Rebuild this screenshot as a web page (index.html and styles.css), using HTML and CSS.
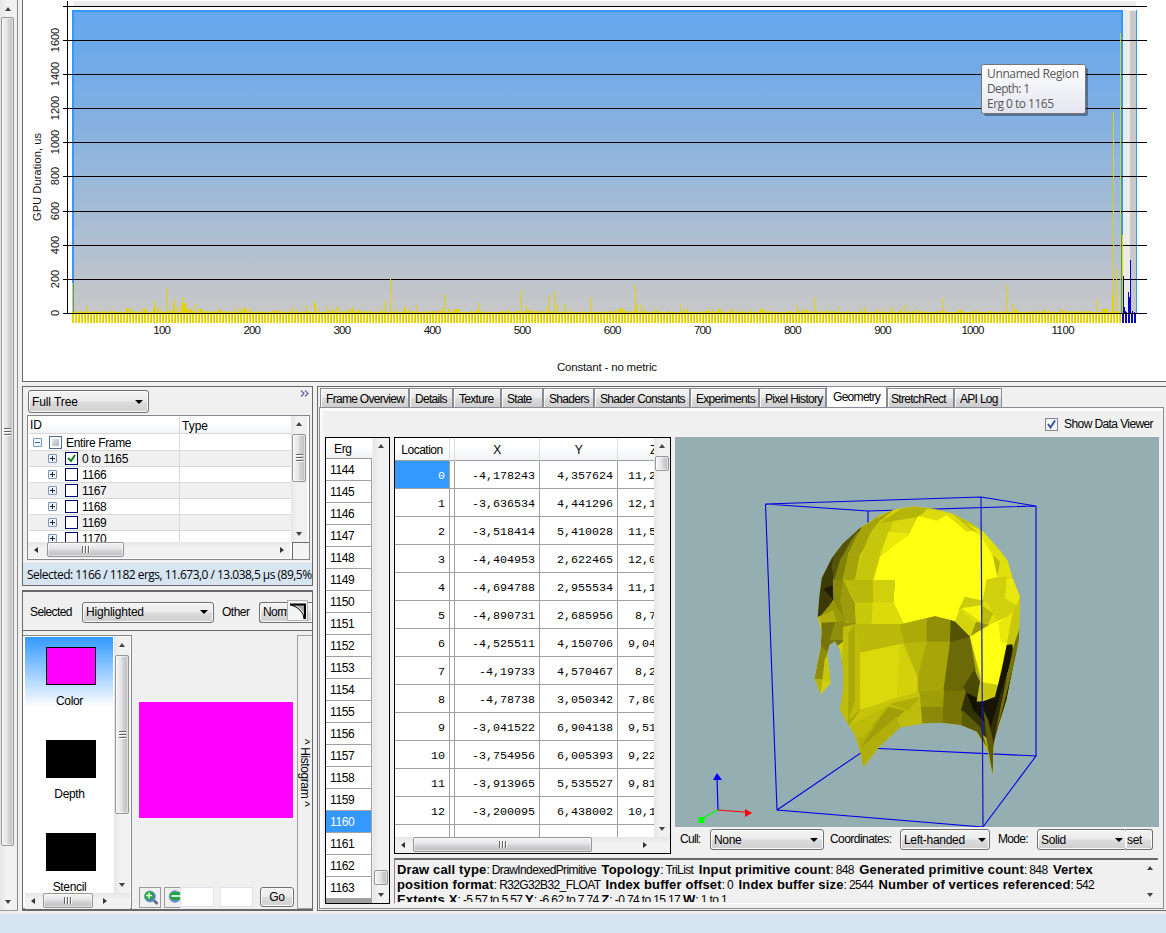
FILE: index.html
```html
<!DOCTYPE html>
<html lang="en">
<head>
<meta charset="utf-8">
<title>Frame Analyzer</title>
<link rel="stylesheet" href="styles.css">
</head>
<body>
<div class="app">
  <div class="vbar outer-bar"><i class="arr a-up"></i><div class="track"><div class="thumb outer-thumb"><i class="grip"></i></div></div><i class="arr a-down"></i></div>
  <main class="content">
    <section class="chart">
      <svg class="plot" width="1143" height="381" viewBox="23 0 1143 381">
        <defs>
          <linearGradient id="sky" x1="0" y1="0" x2="0" y2="1"><stop offset="0" stop-color="#66a8ee"/><stop offset=".17" stop-color="#70aae8"/><stop offset=".9" stop-color="#bec4cb"/><stop offset="1" stop-color="#c8c8c8"/></linearGradient>
          <linearGradient id="tipbg" x1="0" y1="0" x2="0" y2="1"><stop offset="0" stop-color="#fff"/><stop offset="1" stop-color="#e4e5f0"/></linearGradient>
          <pattern id="ty" width="3" height="10" patternUnits="userSpaceOnUse"><rect width="2" height="10" fill="#f0dc00"/><rect x="1" width="1" height="10" fill="#dcca08"/></pattern>
        </defs>
        <g shape-rendering="crispEdges">
          <rect x="73" y="1" width="1063" height="5" fill="#ebebeb"/>
          <rect x="72" y="10" width="1064" height="303" fill="#ebebeb"/>
          <rect x="1130" y="11" width="6" height="302" fill="#c8c8c8"/>
          <rect x="1136" y="10" width="1" height="303" fill="#3399ff"/>
          <rect x="72" y="10" width="1051" height="303" fill="#3399ff"/>
          <rect x="74" y="12" width="1047" height="301" fill="url(#sky)"/>
          <g id="gridlines"></g>
          <rect x="67" y="1" width="1" height="313" fill="#000"/>
          <g id="bars"></g>
          <rect x="63" y="313" width="1084" height="1" fill="#000"/>
          <rect x="72" y="314" width="1050" height="9" fill="url(#ty)"/>
          <path d="M1123 314v9M1126 314v9M1129 314v9M1132 314v9M1135 314v9" stroke="#0a0ab4" stroke-width="2"/>
        </g>
        <g id="labels" class="axis"></g>
        <text class="axis" transform="translate(41 177) rotate(-90)" text-anchor="middle" textLength="88">GPU Duration, us</text>
        <text class="axis cap" x="557" y="371" textLength="100">Constant - no metric</text>
        <rect x="984" y="68" width="104" height="48" rx="2" fill="#000" opacity=".35"/>
        <rect x="981.5" y="64.5" width="104" height="49" rx="2" fill="url(#tipbg)" stroke="#767676"/>
        <g class="tiptext"><text x="987" y="78" textLength="92">Unnamed Region</text><text x="987" y="93" textLength="43">Depth: 1</text><text x="987" y="108" textLength="67">Erg 0 to 1165</text></g>
      </svg>
    </section>
    <div class="lower">
      <div class="leftcol">
        <section class="tree-panel">
          <div class="tree-top"><div class="combo full">Full Tree</div><svg class="chev" width="9" height="7" viewBox="0 0 9 7"><path d="M1 .5l3 3-3 3M5 .5l3 3-3 3" fill="none" stroke="#6464a8" stroke-width="1.200"/></svg></div>
          <div class="tree">
            <div class="tree-view">
              <div class="tree-main">
                <div class="trow thead"><span class="cid">ID</span><span>Type</span></div>
                <div class="trow root"><span class="cid"><i class="pm minus"></i><i class="box part"></i>Entire Frame</span></div>
                <div class="trow"><span class="cid sub"><i class="pm"></i><i class="box"><svg width="11" height="11" viewBox="0 0 11 11"><path d="M2 5l3 3 4-6" fill="none" stroke="#118011" stroke-width="2"/></svg></i>0 to 1165</span></div>
                <div class="trow"><span class="cid sub"><i class="pm"></i><i class="box"></i>1166</span></div>
                <div class="trow"><span class="cid sub"><i class="pm"></i><i class="box"></i>1167</span></div>
                <div class="trow"><span class="cid sub"><i class="pm"></i><i class="box"></i>1168</span></div>
                <div class="trow"><span class="cid sub"><i class="pm"></i><i class="box"></i>1169</span></div>
                <div class="trow"><span class="cid sub"><i class="pm"></i><i class="box"></i>1170</span></div>
              </div>
              <div class="vbar tree-v"><i class="arr a-up"></i><div class="track"><div class="thumb"><i class="grip"></i></div></div><i class="arr a-down"></i></div>
            </div>
            <div class="tree-bot"><div class="hbar"><i class="arr a-left"></i><div class="track"><div class="thumb"><i class="grip"></i></div></div><i class="arr a-right"></i></div><i class="corner"></i></div>
          </div>
          <div class="status">Selected: 1166 / 1182 ergs, 11.673,0 / 13.038,5 µs (89,5%</div>
        </section>
        <section class="buf-panel">
          <div class="buf-tools"><span class="lb1">Selected</span><div class="combo hl">Highlighted</div><span class="lb2">Other</span><div class="combo norm">Norm</div>
            <svg class="curve" width="21" height="21" viewBox="0 0 21 21"><rect x=".5" y=".5" width="20" height="20" fill="#f4f4f4" stroke="#b0b0b0"/><path d="M5 4H18V18Q17 7 5 5z" fill="#a8a8a8"/><path d="M3 4.500H18V19" fill="none" stroke="#000" stroke-width="2"/><path d="M4 5L9 7 13 10 16 14 17 19" fill="none" stroke="#000"/></svg>
          </div>
          <div class="buf-body">
            <div class="list">
              <div class="list-view">
                <div class="items">
                  <div class="item sel"><i class="mag"></i><span>Color</span></div>
                  <div class="item"><i></i><span>Depth</span></div>
                  <div class="item"><i></i><span>Stencil</span></div>
                </div>
                <div class="vbar list-v"><i class="arr a-up"></i><div class="track"><div class="thumb"><i class="grip"></i></div></div><i class="arr a-down"></i></div>
              </div>
              <div class="hbar list-h"><i class="arr a-left"></i><div class="track"><div class="thumb"><i class="grip"></i></div></div><i class="arr a-right"></i></div>
            </div>
            <div class="preview">
              <div class="image"></div>
              <div class="zoomrow">
                <svg class="zin" width="22" height="21" viewBox="0 0 22 21"><rect x=".5" y=".5" width="21" height="20" fill="#f0f0f0" stroke="#9a9a9a"/><path d="M15 13.500l3.500 3.500" stroke="#56657c" stroke-width="2.500"/><circle cx="11" cy="9.500" r="5.500" fill="#4a7fc4" stroke="#7f9fce"/><circle cx="10" cy="8.500" r="4.300" fill="#1fb02c"/><path d="M7 8.500h6M10 5.500v6" stroke="#e4ffe0" stroke-width="1.600"/></svg>
                <svg class="zout" width="16" height="21" viewBox="0 0 16 21"><path d="M16 .5H.5V20.500H16" fill="#f0f0f0" stroke="#9a9a9a"/><circle cx="11" cy="9.500" r="5.800" fill="#5588c4" stroke="#7f9fce"/><path d="M16 5H10a4 4 0 0 0 0 8h6z" fill="#27a04a"/><path d="M7.500 9h8.500" stroke="#e4ffe0" stroke-width="1.800"/></svg>
                <i class="inp i1"></i><i class="inp i2"></i><div class="btn go">Go</div>
              </div>
            </div>
            <div class="histo"><span>^ Histogram ^</span></div>
          </div>
        </section>
      </div>
      <section class="details">
        <nav class="tabs"><span class="t1">Frame Overview</span><span class="t2">Details</span><span class="t3">Texture</span><span class="t4">State</span><span class="t5">Shaders</span><span class="t6">Shader Constants</span><span class="t7">Experiments</span><span class="t8">Pixel History</span><span class="t9 active">Geometry</span><span class="t10">StretchRect</span><span class="t11">API Log</span></nav>
        <div class="page">
          <div class="show"><svg width="13" height="13" viewBox="0 0 13 13"><rect x=".5" y=".5" width="12" height="12" fill="#f2f4f6" stroke="#82868c"/><path d="M3 6l2.500 3.500L10 2.500" fill="none" stroke="#3f549c" stroke-width="2"/></svg>Show Data Viewer</div>
          <div class="cols">
            <div class="erg"><div class="erg-main"><div class="erg-head">Erg</div><div id="ergs"></div></div>
              <div class="vbar erg-v"><i class="arr a-up"></i><div class="track"><div class="thumb"></div></div><i class="arr a-down"></i></div></div>
            <div class="rest">
              <div class="mid">
                <div class="loc">
                  <div class="loc-view"><div class="loc-main"><div class="lrow lhead"><b>Location</b><b></b><b>X</b><b>Y</b><b>Z</b></div><div id="locs"></div></div>
                    <div class="vbar loc-v"><i class="arr a-up"></i><div class="track"><div class="thumb"></div></div><i class="arr a-down"></i></div></div>
                  <div class="hbar loc-h"><i class="arr a-left"></i><div class="track"><div class="thumb"><i class="grip"></i></div></div><i class="arr a-right"></i></div>
                </div>
                <div class="viewer">
                  <svg class="scene" width="484" height="390" viewBox="675 437 484 390">
                    <path fill="none" stroke="#0000e6" stroke-width="1.100" d="M765.500 504L981 497 1036 506 868 511zM765.500 504L777 810 983 827 1036 756 868 748L777 810M1036 506V756M868 511V748"/>
                    <g transform="translate(780 480) scale(.33333)">
                      <clipPath id="sil"><path d="M113 412L118 350 125 295 155 235 190 190 245 140 300 105 345 88 400 79 465 87 515 100 575 130 610 155 655 205 683 242 697 290 720 350 717 480 700 560 680 660 655 740 641 790 638 885 625 820 590 755 543 735 487 728 430 730 360 742 298 800 250 862 240 810 225 765 200 725 180 690 190 630 190 570 180 510 165 484 148 495 142 520 152 610 122 643 103 597 122 500 125 455z"/></clipPath>
                      <g clip-path="url(#sil)">
                        <rect x="90" y="60" width="650" height="840" fill="#d0d00e"/>
                        <path d="M110 415L115 300 160 220 250 130 225 190 185 240 160 300 160 360 130 405z" fill="#3c3a08"/>
                        <path d="M190 190L300 105 235 170 205 230 188 300 160 300 165 240z" fill="#828208"/>
                        <path d="M170 190L250 130 215 180 180 240 162 300 155 260z" fill="#56540a"/>
                        <path d="M245 140L345 85 310 115 280 160 240 225 225 300 188 300 205 220z" fill="#a4a40a"/>
                        <path d="M300 120L400 79 330 155 300 215 278 300 225 300 250 210 270 160z" fill="#c6c60c"/>
                        <path d="M345 95L400 79 465 87 420 112 380 165 300 215 330 155z" fill="#d8d80c"/>
                        <path d="M360 88L400 79 455 86 410 112 300 130z" fill="#b5b508"/>
                        <path d="M440 87L520 102 575 130 600 170 480 125 420 112z" fill="#dcdc0c"/>
                        <path d="M325 155L385 160 320 245 340 303 278 303z" fill="#eaea0a"/>
                        <path d="M415 108L470 122 500 105 560 155 590 150 640 225 655 290 620 300 605 375 555 350 525 425 465 409 370 432 340 370 345 300 283 300 300 230 385 165z" fill="#ffff12"/>
                        <path d="M515 100L575 130 620 175 575 150z" fill="#bebe0c"/>
                        <path d="M560 130L610 155 683 242 640 230 600 165z" fill="#e6e60c"/>
                        <path d="M610 155L683 242 697 290 655 290 640 230z" fill="#e0e00c"/>
                        <path d="M638 225L660 245 652 290z" fill="#baba0c"/>
                        <path d="M620 298L697 293 708 330 680 360 612 360z" fill="#d0d00c"/>
                        <path d="M680 293L697 293 720 350 718 380 675 355z" fill="#e8e80e"/>
                        <path d="M160 300L190 300 225 375 195 425 160 365z" fill="#8c8a08"/><path d="M190 300H345L340 370 228 370z" fill="#b9b90c"/><path d="M278 300H345L340 368H280z" fill="#d0d00c"/>
                        <path d="M190 303L225 370 228 432 195 425 180 360z" fill="#9d9c0a"/>
                        <path d="M225 367L340 367 372 434 228 434z" fill="#c9c90c"/><path d="M278 367L340 367 372 434 275 434z" fill="#dbdb0c"/>
                        <path d="M130 327L158 315 160 360z" fill="#1e1c04"/><path d="M118 412L160 362 195 425 125 440z" fill="#9a980a"/>
                        <path d="M112 410L135 403 160 390 170 425 127 430z" fill="#b0ae0c"/>
                        <path d="M125 428L195 425 195 480 145 520 122 500z" fill="#77750a"/><path d="M165 425L228 430 205 480 150 480z" fill="#908e0a"/>
                        <path d="M122 500L142 515 128 598 103 597z" fill="#8e8c0a"/><path d="M135 530L148 560 152 610 127 600z" fill="#c5c50c"/><path d="M103 597H128L122 643z" fill="#b4b20c"/>
                        <path d="M555 350L620 365 650 420 625 435 575 470 525 425z" fill="#dfdf0c"/>
                        <path d="M555 350L612 363 605 375 535 390z" fill="#cccc0e"/><path d="M538 390L585 425 570 465 525 425z" fill="#d4d40c"/>
                        <path d="M545 385L605 375 610 430z" fill="#f7f712"/>
                        <path d="M605 375L640 400 625 432 607 430z" fill="#bbbb0c"/>
                        <path d="M190 440L228 431 370 433 465 409 525 425 570 470 600 590 605 660 640 800 638 885 590 755 430 730 298 800 250 862 180 690 192 560z" fill="#b3b20a"/>
                        <path d="M190 440L243 432 243 720 200 730 180 690z" fill="#bdbd0a"/><path d="M205 460L225 432 225 660 205 720z" fill="#a9a908"/>
                        <path d="M240 515L375 488 417 595 417 637 240 692z" fill="#d2d10c"/><path d="M240 515L360 491 350 650 240 692z" fill="#dad90c"/>
                        <path d="M225 432H362L374 489 240 518z" fill="#bbb90a"/>
                        <path d="M360 433L442 414 442 486 372 491z" fill="#abaa09"/><path d="M440 415L465 409 512 420 512 486 440 486z" fill="#918f08"/>
                        <path d="M370 490L442 485 415 597z" fill="#b8b70a"/><path d="M440 485H512L494 633 413 637 413 595z" fill="#a7a508"/>
                        <path d="M512 420L525 425 570 470 587 570 550 637 490 634 510 485z" fill="#6c6a07"/><path d="M512 420L525 425 570 470 510 487z" fill="#555306"/>
                        <path d="M415 635L494 630 489 730 427 730z" fill="#a09e08"/><path d="M418 681L490 680 487 732 425 732z" fill="#8b8907"/><path d="M492 632L560 633 543 737 487 732z" fill="#777506"/>
                        <path d="M583 568L600 605 599 660 558 640 550 620z" fill="#4b4906"/><path d="M558 636L605 660 640 790 590 750 543 690z" fill="#333106"/>
                        <path d="M560 640L605 660 625 740 580 690z" fill="#141301"/><path d="M548 690L600 740 620 800 590 755 543 737z" fill="#5b5a07"/>
                        <path d="M240 690L330 668 300 740 205 740 200 725z" fill="#aaa908"/><path d="M240 691L417 633 420 652 330 677 205 740z" fill="#c5c40b"/>
                        <path d="M330 670L420 650 427 732 360 744 298 800z" fill="#bdbc0a"/><path d="M330 672L385 692 420 650z" fill="#afae08"/>
                        <path d="M325 680L250 770 230 775 205 740z" fill="#bcbb0a"/><path d="M325 680L375 692 270 790 240 805z" fill="#9f9e08"/><path d="M240 805L350 710 362 742 298 800 250 862z" fill="#b0af09"/>
                        <path d="M570 470L625 435 695 405 680 495 660 580 650 650 597 665 605 600z" fill="#ffff12"/>
                        <path d="M588 425L628 434 572 468z" fill="#9b9908"/>
                        <path d="M655 430L700 395 680 490 662 486z" fill="#e8e80c"/>
                        <path d="M697 405L720 350 717 480 697 495 680 495z" fill="#c8c80c"/>
                        <path d="M600 605L655 615 648 650 590 665z" fill="#c9c90c"/>
                        <path d="M680 495L697 493 700 520 665 640 650 740 630 760 605 665 645 650 665 570z" fill="#171401"/>
                        <path d="M665 630L700 540 717 480 700 560 680 660 655 740 640 800 630 750z" fill="#302d04"/>
                        <path d="M700 500L720 440 717 480 700 560 640 795 660 690z" fill="#74720a"/>
                        <path d="M610 690L625 720 641 790 638 885 620 780z" fill="#5d5a09"/>
                      </g>
                    </g>
                    <path d="M981 497L983 827" stroke="#1414c8" stroke-width="1.200"/>
                    <path d="M718 810L717 778" stroke="#00f" stroke-width="1.200"/><path d="M717 773l5 7h-9z" fill="#00f"/><path d="M718 810L750 812.500" stroke="red" stroke-width="1.200"/><path d="M745 809l7 4-7 4z" fill="red"/><path d="M718 810L703 818" stroke="#0f0" stroke-width="1.200"/><rect x="698.500" y="817" width="6" height="6" fill="#0f0"/>
                  </svg>
                  <div class="controls"><span class="c1">Cull:</span><div class="combo k1">None</div><span class="c2">Coordinates:</span><div class="combo k2">Left-handed</div><span class="c3">Mode:</span><div class="combo k3">Solid</div><div class="btn reset">set</div></div>
                </div>
              </div>
              <div class="info">
                <div class="info-text">
                  <p><b>Draw call type</b>: DrawIndexedPrimitive &nbsp;<b>Topology</b>: TriList &nbsp;<b>Input primitive count</b>: 848 &nbsp;<b>Generated primitive count</b>: 848 &nbsp;<b>Vertex</b></p>
                  <p><b>position format</b>: R32G32B32_FLOAT &nbsp;<b>Index buffer offset</b>: 0 &nbsp;<b>Index buffer size</b>: 2544 &nbsp;<b>Number of vertices referenced</b>: 542</p>
                  <p><b>Extents X</b>: -5.57 to 5.57 <b>Y</b>: -6.62 to 7.74 <b>Z</b>: -0.74 to 15.17 <b>W</b>: 1 to 1</p>
                </div>
                <div class="vbar info-v"><i class="arr a-up"></i><div class="track"></div><i class="arr a-down"></i></div>
              </div>
            </div>
          </div>
        </div>
      </section>
    </div>
  </main>
</div>
<script src="app.js"></script>
</body>
</html>
```
FILE: styles.css
```css
* { box-sizing: border-box; }
body { margin: 0; width: 1166px; height: 933px; overflow: hidden; background: #d7e4f2; font: 12px/15px "Liberation Sans", Arial, sans-serif; letter-spacing: -.35px; color: #000; }
i { font-style: normal; display: block; flex: none; }
.app { display: flex; width: 1166px; height: 914px; background: #f0f0f0; }
.content { flex: 1; padding-left: 4px; display: flex; flex-direction: column; gap: 4px; min-width: 0; }
.chart { height: 382px; background: #fff; border-left: 1px solid #696969; border-bottom: 1px solid #696969; overflow: hidden; }
.plot { display: block; }
.axis { font-size: 11px; letter-spacing: 0; fill: #111; }
.axis.cap { font-size: 11.5px; }
.tiptext { font: 12px "Open Sans", sans-serif; letter-spacing: 0; fill: #575757; }

/* scroll bars */
.vbar { display: flex; flex-direction: column; width: 16px; flex: none; background: linear-gradient(90deg, #e6e6e6, #f2f2f2 40%, #f0f0f0); }
.hbar { display: flex; height: 16px; flex: none; background: linear-gradient(#e6e6e6, #f2f2f2 40%, #f0f0f0); }
.track { flex: 1; display: flex; min-height: 0; min-width: 0; }
.vbar .track { flex-direction: column; }
.arr { width: 16px; height: 16px; display: flex; align-items: center; justify-content: center; }
.arr::before { content: ""; border: 3.5px solid transparent; }
.a-up::before { border-top-width: 0; border-bottom: 4px solid #444; }
.a-down::before { border-bottom-width: 0; border-top: 4px solid #444; }
.a-left::before { border-left-width: 0; border-right: 4px solid #333; }
.a-right::before { border-right-width: 0; border-left: 4px solid #333; }
.thumb { border: 1px solid #979797; border-radius: 2px; display: flex; align-items: center; justify-content: center; flex: none; box-shadow: inset 0 0 0 1px rgba(255,255,255,.5); }
.vbar .thumb { margin: 0 1px; background: linear-gradient(90deg, #f5f5f5, #e4e4e6 45%, #d2d2d4 60%, #bfbfc2); }
.hbar .thumb { background: linear-gradient(#f5f5f5, #e4e4e6 45%, #d2d2d4 60%, #bfbfc2); height: 15px; }
.grip { width: 7px; height: 8px; background: repeating-linear-gradient(#666 0 1px, #fff 1px 2px, transparent 2px 3px); }
.hbar .grip { height: 7px; width: 8px; background: repeating-linear-gradient(90deg, #666 0 1px, #fff 1px 2px, transparent 2px 3px); }
.outer-bar { width: 18px; height: 911px; border-right: 1px solid #8a8a8a; border-bottom: 1px solid #999; padding-right: 2px; }
.outer-bar .arr { height: 17px; }
.outer-thumb { height: 829px; }

.combo, .btn { height: 21px; border: 1px solid #707070; border-radius: 3px; background: linear-gradient(#f3f3f3, #ebebeb 48%, #dcdcdc 52%, #cfcfcf); box-shadow: inset 0 0 0 1px #fafafa; padding: 0 5px 0 3px; line-height: 20px; display: flex; justify-content: space-between; align-items: center; flex: none; white-space: nowrap; }
.combo::after { content: ""; border: 4px solid transparent; border-top-color: #000; border-bottom: 0; }

.lower { display: flex; gap: 4px; height: 525px; }
.leftcol { width: 291px; display: flex; flex-direction: column; gap: 4px; }
.tree-panel { height: 200px; border: 1px solid #696969; overflow: hidden; }
.tree-top { display: flex; justify-content: space-between; padding: 3px 3px 0 5px; height: 28px; }
.full { width: 121px; height: 23px; letter-spacing: -.1px; }
.tree { margin-left: 4px; width: 283px; height: 145px; border: 1px solid #828790; background: #fff; display: flex; flex-direction: column; }
.tree-view { display: flex; height: 126px; padding-left: 1px; }
.tree-main { width: 262px; overflow: hidden; }
.trow { height: 16px; display: flex; border-bottom: 1px solid #d9d9d9; line-height: 16px; }
.trow:nth-child(odd) { background: #f0f0f0; }
.cid { width: 151px; flex: none; border-right: 1px solid #d9d9d9; display: flex; align-items: center; padding-left: 4px; }
.trow.thead { height: 18px; background: linear-gradient(#fff 40%, #f2f4f6); line-height: 18px; letter-spacing: 0; padding-top: 1px; }
.thead .cid { padding-left: 1px; margin-right: 2px; width: 151px; }
.trow.root { height: 17px; padding-top: 1px; }
.cid.sub { padding-left: 19px; }
.pm { width: 9px; height: 9px; margin-right: 8px; border: 1px solid #7d98b8; border-radius: 1px; background: linear-gradient(#223, #223) 50% 50%/5px 1px no-repeat, linear-gradient(#223, #223) 50% 50%/1px 5px no-repeat, #edf3fa; }
.minus { margin-right: 7px; background: linear-gradient(#26c, #26c) 50% 50%/5px 1px no-repeat, #f4f8fc; }
.box { width: 13px; height: 13px; border: 1px solid #00007c; background: #fff; margin-right: 4px; }
.box svg { display: block; }
.part { border-color: #4a6a94; background: linear-gradient(135deg, #f5f5f5, #9ba5b5); box-shadow: inset 0 0 0 2px #fff; }
.tree-bot { display: flex; justify-content: space-between; height: 17px; }
.tree-bot .hbar { width: 262px; }
.tree-bot .thumb { width: 77px; margin-left: 3px; }
.corner { width: 17px; border: solid #696969; border-width: 1px 0 0 1px; background: #f4f4f4; }
.tree-v .thumb { height: 48px; margin-top: 2px; }
.status { height: 26px; background: #d7e4f2; margin-top: 3px; padding: 4px 0 0 4px; white-space: nowrap; font-family: "Open Sans", sans-serif; font-size: 12px; letter-spacing: -.52px; }
.buf-panel { height: 321px; border: 2px solid #696969; border-left-width: 1px; border-right-width: 1px; display: flex; flex-direction: column; overflow: hidden; }
.buf-tools { height: 39px; border-bottom: 1px solid #696969; display: flex; align-items: center; padding: 2px 0 0 7px; position: relative; overflow: hidden; flex: none; }
.lb1 { width: 52px; flex: none; letter-spacing: -.6px; }
.hl { width: 132px; margin-right: 8px; letter-spacing: -.2px; }
.lb2 { width: 37px; flex: none; letter-spacing: -.5px; }
.norm { width: 53px; border-right: 0; border-radius: 3px 0 0 3px; letter-spacing: -.6px; }
.norm::after { display: none; }
.curve { position: absolute; left: 264px; top: 8px; }
.buf-body { flex: 1; display: flex; padding-top: 4px; min-height: 0; }
.list { width: 109px; border: 1px solid #828790; border-left: 0; background: #fff; padding: 1px 1px 0 2px; }
.list-view { display: flex; height: 256px; }
.items { width: 88px; overflow: hidden; }
.item { height: 93px; display: flex; flex-direction: column; align-items: center; gap: 9px; padding-top: 10px; padding-left: 1px; }
.item i { width: 50px; height: 38px; background: #000; border: 1px solid #000; margin-left: 3px; }
.item i.mag { background: #f0f; }
.sel { background: linear-gradient(#3399ff, #fff 70px); }
.list-v { margin-left: 1px; }
.list-v .thumb { height: 159px; margin-top: 2px; }
.list-h { padding-right: 17px; }
.list-h .thumb { width: 50px; margin-left: 2px; }
.preview { width: 165px; padding: 67px 0 0 7px; display: flex; flex-direction: column; justify-content: space-between; flex: none; }
.image { width: 154px; height: 116px; background: #f0f; }
.zoomrow { display: flex; height: 22px; }
.zout { margin-left: 3px; }
.inp { height: 20px; background: #fff; border: 1px solid #e2e3ea; }
.i1 { width: 34px; margin-right: 6px; }
.i2 { width: 33px; margin-right: 7px; }
.go { width: 34px; height: 20px; padding: 0; justify-content: center; }
.histo { flex: 1; border: 1px solid #a0a0a0; border-right: 0; display: flex; justify-content: center; align-items: center; padding: 1px 2px 0 0; }
.histo span { writing-mode: vertical-rl; line-height: 13px; letter-spacing: -.4px; }

.details { width: 849px; border: 1px solid #696969; border-right: 0; padding: 0 0 0 1px; }
.tabs { display: flex; height: 20px; padding-left: 1px; align-items: flex-end; font-size: 12px; letter-spacing: -.7px; }
.tabs span { height: 19px; border: 1px solid #898c95; border-bottom: 0; background: linear-gradient(#f3f3f3, #ebebeb 48%, #dddddd 52%, #cdcdcd); box-shadow: inset 1px 1px 0 #fff; padding-left: 5px; line-height: 20px; white-space: nowrap; flex: none; }
.tabs .active { height: 21px; background: #fff; line-height: 20px; padding-left: 6px; }
.t1 { width: 89px; } .t2 { width: 44px; } .t3 { width: 48px; } .t4 { width: 42px; } .t5 { width: 51px; } .t6 { width: 96px; } .t7 { width: 69px; } .t8 { width: 67px; } .t9 { width: 61px; } .t10 { width: 67px; } .t11 { width: 48px; }
.tabs .t10 { padding-left: 3px; }
.page { width: 845px; height: 502px; border: 1px solid #898c95; padding-left: 5px; box-shadow: inset 3px 3px 0 #fafafa; display: flex; flex-direction: column; }
.show { height: 29px; display: flex; align-items: center; justify-content: flex-end; gap: 6px; padding: 3px 10px 0 0; letter-spacing: -.6px; }
.cols { display: flex; gap: 4px; }
.erg { width: 65px; height: 467px; border: 1px solid #000; display: flex; background: #f0f0f0; justify-content: space-between; overflow: hidden; }
.erg-main { width: 46px; background: #a0a0a0; }
.erg-head { height: 21px; background: linear-gradient(#fff 40%, #f0f2f4); padding: 4px 0 0 8px; border-bottom: 1px solid #999; }
.erow { height: 22px; background: #fff; border: solid #a0a0a0; border-width: 0 1px 1px 0; padding: 4px 0 0 4px; }
.hot { background: #3399ff !important; color: #fff; }
.erg-v .thumb { height: 15px; margin-top: 416px; }
.rest { width: 765px; }
.mid { display: flex; gap: 4px; height: 420px; }
.loc { width: 277px; height: 417px; border: 1px solid #000; flex: none; background: #f0f0f0; }
.loc-view { display: flex; height: 399px; }
.loc-main { width: 259px; overflow: hidden; background: #fff; flex: none; }
.lrow { display: grid; grid-template-columns: 55px 5px 85px 78px 68px; height: 28px; }
.lrow > * { border: solid #a0a0a0; border-width: 0 1px 1px 0; text-align: right; font: 11.7px/31px "Liberation Mono", monospace; letter-spacing: 0; padding-right: 4px; white-space: nowrap; overflow: hidden; }
.lrow > :nth-child(2) { padding: 0; }
.lrow > :nth-child(5) { text-align: left; padding-left: 10px; white-space: pre; }
.lhead { height: 23px; background: linear-gradient(#fff 40%, #f0f2f4); }
.lhead > * { font: 12px/24px "Liberation Sans", sans-serif; text-align: center; padding: 0; border-right-color: #ddd; letter-spacing: -.6px; }
.lhead > :first-child { letter-spacing: -.5px; }
.lrow.lhead > :nth-child(5) { padding-left: 32px; }
.loc-v .thumb { height: 15px; margin-top: 2px; }
.loc-h { padding-right: 17px; }
.loc-h .thumb { width: 179px; margin-left: 2px; }
.viewer { width: 484px; flex: none; }
.scene { display: block; background: #95aeb1; }
.controls { display: flex; padding-top: 2px; height: 25px; line-height: 21px; padding-left: 5px; }
.controls span { flex: none; letter-spacing: -.7px; }
.controls .c2 { letter-spacing: -.55px; }
.c1 { width: 30px; } .k1 { width: 114px; margin-right: 6px; } .c2 { width: 70px; } .k2 { width: 90px; margin-right: 8px; letter-spacing: -.3px; } .c3 { width: 39px; }
.k3 { width: 90px; } .k2, .k3 { padding-right: 3px; } .reset { width: 27px; margin-left: -1px; border-left: 0; padding-left: 1px; border-radius: 0 3px 3px 0; }
.info { width: 764px; height: 46px; border: 1px solid #828790; border-top: 2px solid #696969; border-bottom-color: #fff; border-right: 0; margin-top: 1px; display: flex; justify-content: space-between; }
.info-text { width: 740px; overflow: hidden; padding: 3px 0 0 2px; height: 42px; }
.info p { margin: 0; white-space: nowrap; letter-spacing: -.62px; font-size: 12px; height: 15px; line-height: 15px; }
.info b { font-size: 13px; line-height: 14px; letter-spacing: .14px; }
.info-v { background: #f0f0f0; }
```
FILE: app.js
```js
const NS = 'http://www.w3.org/2000/svg';
function add(parent, tag, attrs, text) {
  const el = document.createElementNS(NS, tag);
  for (const k in attrs) el.setAttribute(k, attrs[k]);
  if (text !== undefined) el.textContent = text;
  parent.appendChild(el);
}
const $ = id => document.getElementById(id);

// Horizontal grid lines with their duration labels, top to bottom.
[6, 40, 74, 108, 142, 176, 211, 245, 279].forEach((y, i) => {
  add($('gridlines'), 'rect', { x: 63, y, width: 1084, height: 1 });
  if (i) add($('labels'), 'text', { transform: `translate(59 ${y}) rotate(-90)`, 'text-anchor': 'middle' }, 1800 - i * 200);
});
add($('labels'), 'text', { transform: 'translate(59 313) rotate(-90)', 'text-anchor': 'middle' }, '0');
for (let n = 100; n <= 1100; n += 100) add($('labels'), 'text', { x: 72 + n * 0.901, y: 334, 'text-anchor': 'middle', class: 'axis cap', textLength: n > 999 ? 23 : 17.5 }, n);

// Low-level baseline of short draws.
let seed = 7;
const rand = () => (seed = (seed * 16807) % 2147483647) / 2147483647;
for (let x = 73; x < 1121; x++) {
  const r = rand();
  add($('bars'), 'rect', { x, y: 313 - (r > .93 ? 4 : r > .7 ? 2 : 1), width: 1, height: r > .93 ? 4 : r > .7 ? 2 : 1, fill: '#e2d200' });
}
// Peaks: [x, height, width].
[[72,30,1],[87,7,1],[126,5,3],[131,4,2],[143,5,2],[153,5,2],[155,12,1],[158,6,1],[166,25,1],[173,10,1],[174,15,1],[177,6,1],[180,8,1],[182,16,1],[183,10,3],[186,5,2],[189,4,3],[194,9,1],[200,4,3],[235,6,1],[243,5,4],[292,5,1],[306,8,1],[314,12,1],[315,9,1],[326,7,1],[337,6,2],[353,6,1],[380,5,1],[385,12,1],[390,36,1],[404,6,2],[416,8,1],[445,19,1],[442,6,1],[456,4,4],[478,10,1],[521,22,1],[526,8,1],[547,6,1],[549,18,1],[554,22,1],[557,9,1],[565,9,1],[590,16,1],[620,5,3],[635,29,1],[636,9,1],[641,9,1],[680,9,1],[718,4,3],[760,4,4],[797,8,1],[814,16,1],[838,6,1],[864,6,1],[890,6,1],[905,8,1],[942,15,1],[979,4,1],[1006,28,1],[1012,9,1],[1043,3,3],[1096,13,1],[1103,4,4],[1112,18,1],[1113,201,1],[1116,44,1],[1120,280,1],[1122,78,1]].forEach(([x, h, width]) =>
  add($('bars'), 'rect', { x, y: 313 - h, width, height: h, fill: '#e2d200' }));
[[1123,37],[1124,6],[1125,2],[1126,1],[1128,21],[1129,16],[1130,53],[1132,2],[1134,1]].forEach(([x, h]) =>
  add($('bars'), 'rect', { x, y: 313 - h, width: 1, height: h, fill: '#0000c8' }));

let ergs = '';
for (let n = 1144; n <= 1163; n++) ergs += `<div class="erow${n === 1160 ? ' hot' : ''}">${n}</div>`;
$('ergs').innerHTML = ergs;

const verts = [
  ['-4,178243', '4,357624', '11,2'], ['-3,636534', '4,441296', '12,1'], ['-3,518414', '5,410028', '11,5'],
  ['-4,404953', '2,622465', '12,0'], ['-4,694788', '2,955534', '11,1'], ['-4,890731', '2,685956', ' 8,7'],
  ['-4,525511', '4,150706', '9,04'], ['-4,19733', '4,570467', ' 8,2'], ['-4,78738', '3,050342', '7,80'],
  ['-3,041522', '6,904138', '9,51'], ['-3,754956', '6,005393', '9,22'], ['-3,913965', '5,535527', '9,81'],
  ['-3,200095', '6,438002', '10,1'], ['', '', '']
];
$('locs').innerHTML = verts.map((v, i) =>
  `<div class="lrow"><span class="${i ? '' : 'hot'}">${i < 13 ? i : ''}</span><span></span>${v.map(t => `<span>${t}</span>`).join('')}</div>`).join('');
```
